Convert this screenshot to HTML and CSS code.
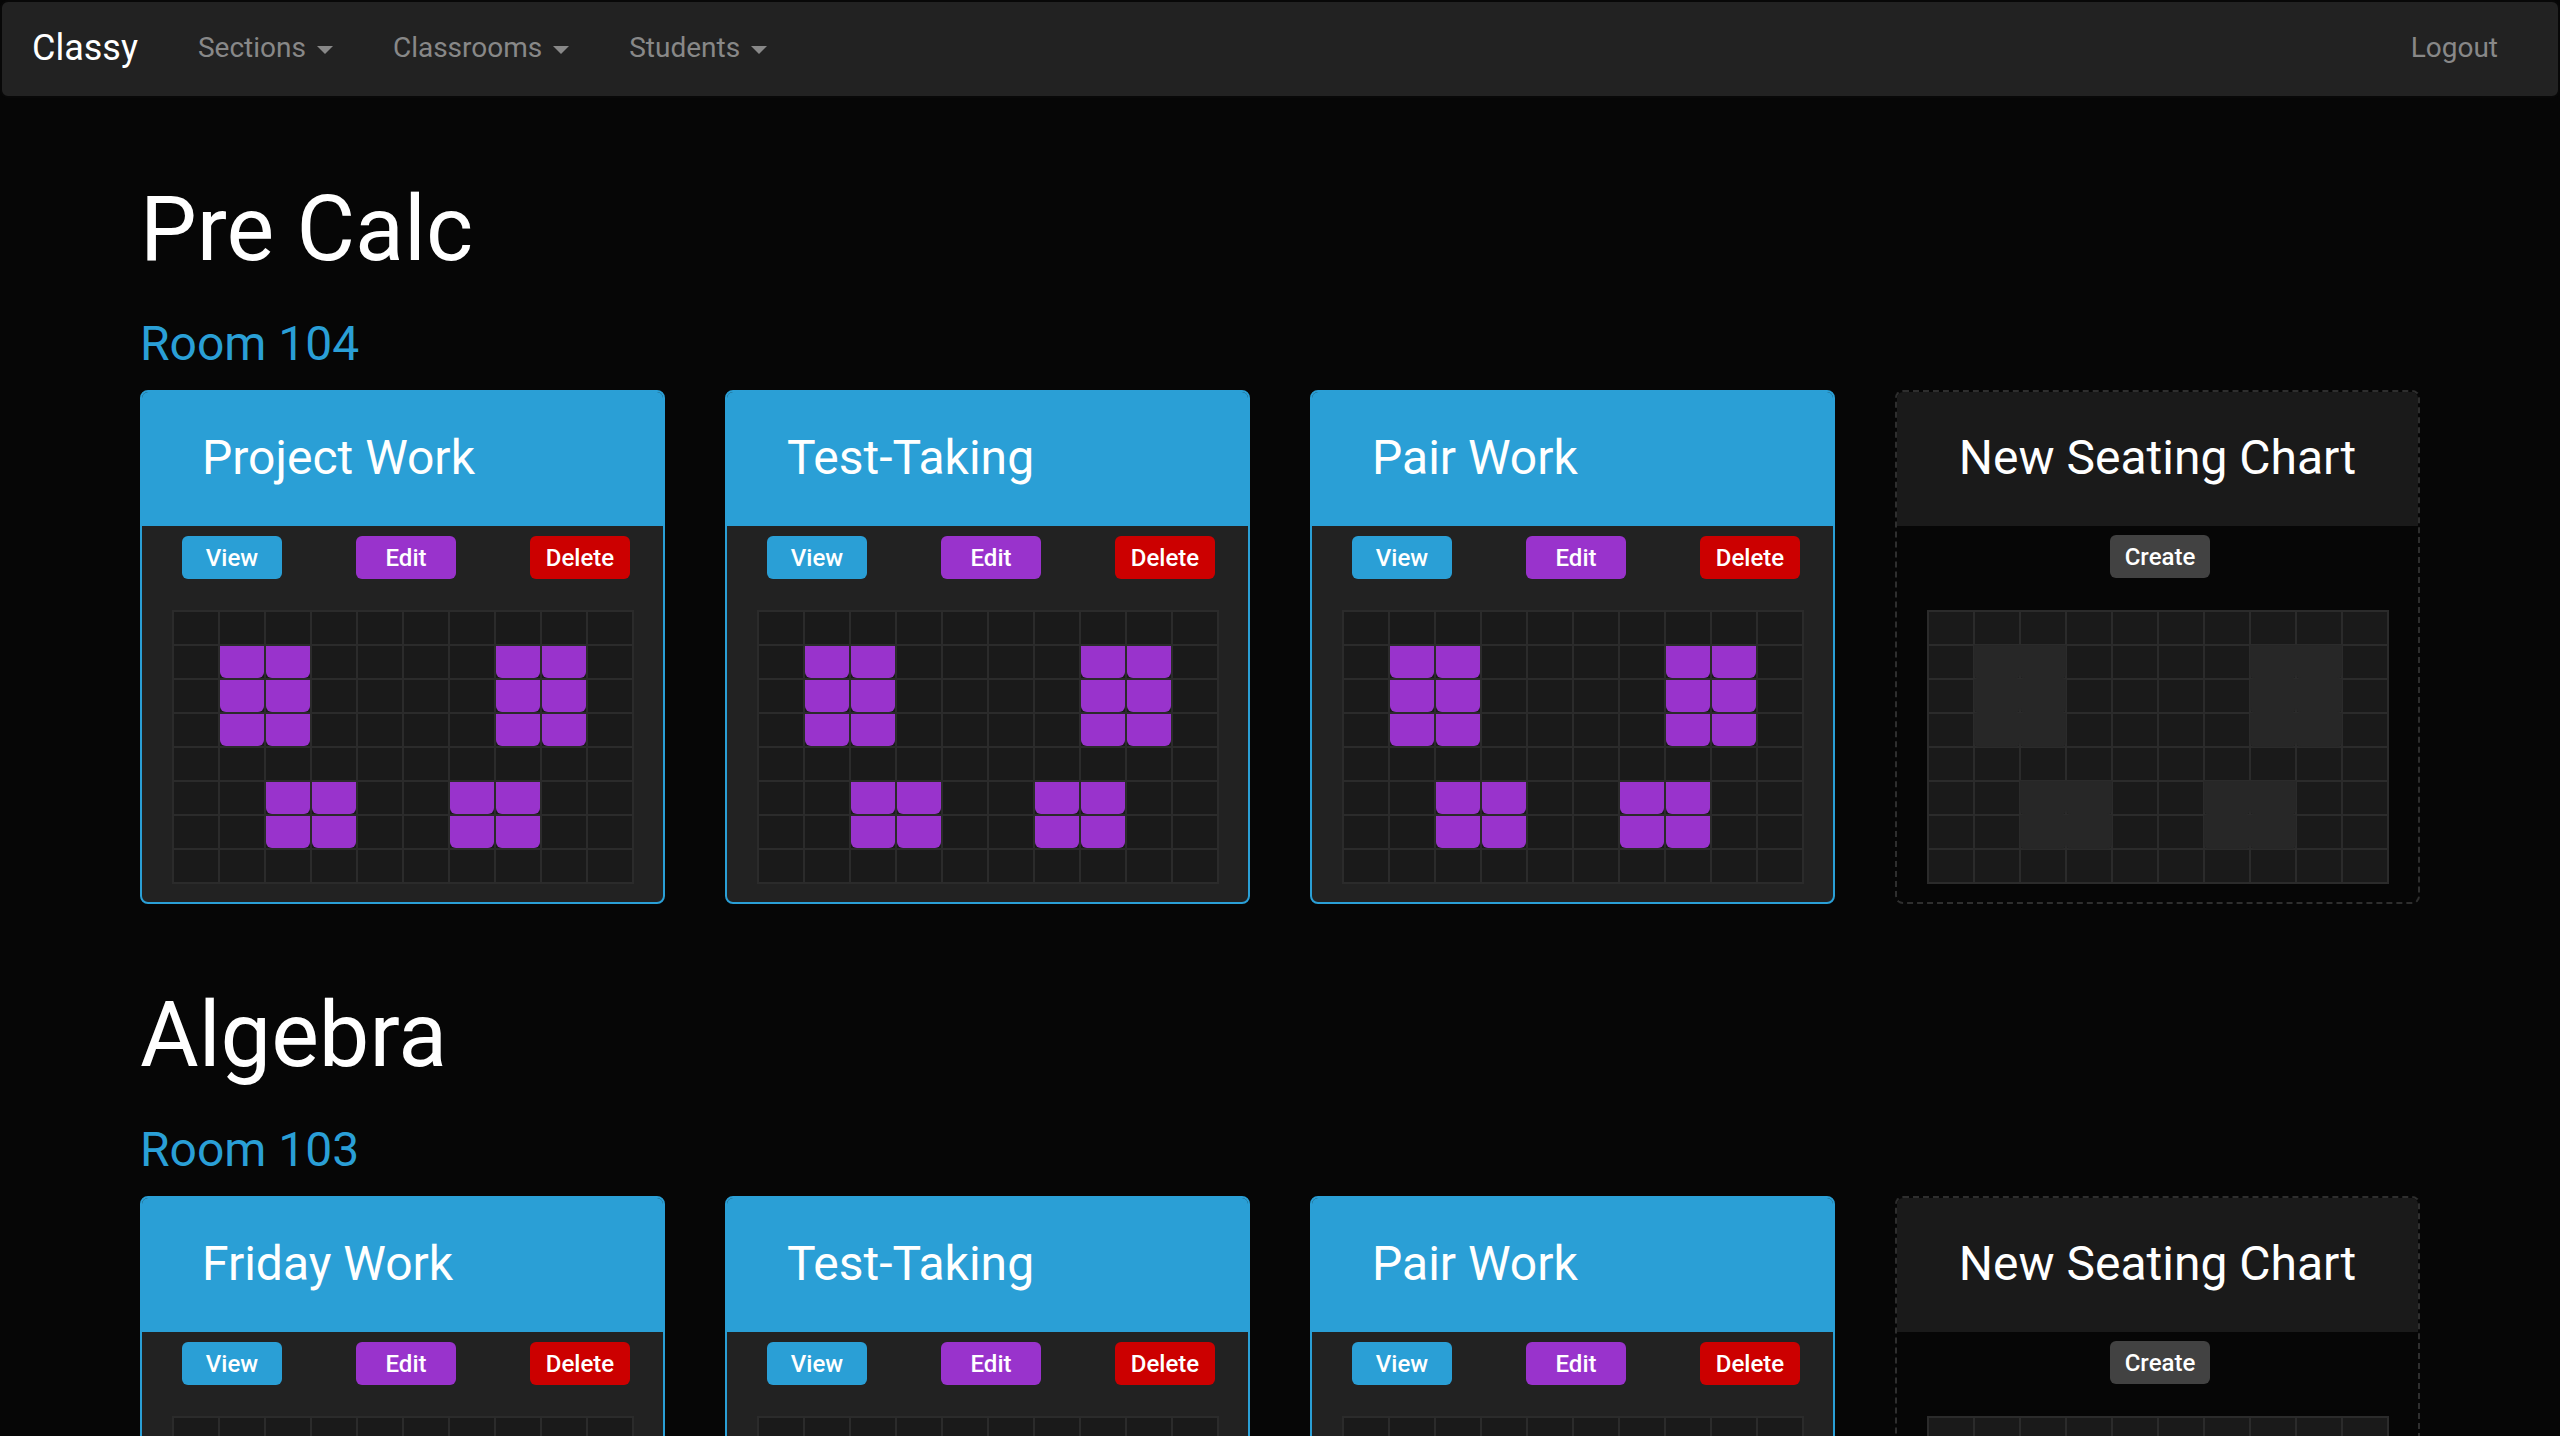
FILE: index.html
```html
<!DOCTYPE html>
<html lang="en">
<head>
<meta charset="utf-8">
<title>Classy</title>
<link rel="stylesheet" href="styles.css">
</head>
<body>
<nav class="navbar">
  <a class="brand" href="#">Classy</a>
  <ul class="nav">
    <li><a href="#">Sections <span class="caret"></span></a></li>
    <li><a href="#">Classrooms <span class="caret"></span></a></li>
    <li><a href="#">Students <span class="caret"></span></a></li>
  </ul>
  <a class="logout" href="#">Logout</a>
</nav>

<main class="container">
  <section class="course">
    <h2 class="course-title">Pre Calc</h2>
    <h4 class="room">Room 104</h4>
    <div class="charts">
      <div class="chart">
        <div class="chart-head"><h3>Project Work</h3></div>
        <div class="chart-body">
          <div class="actions"><a class="btn btn-view" href="#">View</a><a class="btn btn-edit" href="#">Edit</a><a class="btn btn-delete" href="#">Delete</a></div>
          <div class="seatmap">
            <i class="seat r2 c2"></i><i class="seat r2 c3"></i><i class="seat r3 c2"></i><i class="seat r3 c3"></i><i class="seat r4 c2"></i><i class="seat r4 c3"></i>
            <i class="seat r2 c8"></i><i class="seat r2 c9"></i><i class="seat r3 c8"></i><i class="seat r3 c9"></i><i class="seat r4 c8"></i><i class="seat r4 c9"></i>
            <i class="seat r6 c3"></i><i class="seat r6 c4"></i><i class="seat r7 c3"></i><i class="seat r7 c4"></i>
            <i class="seat r6 c7"></i><i class="seat r6 c8"></i><i class="seat r7 c7"></i><i class="seat r7 c8"></i>
          </div>
        </div>
      </div>
      <div class="chart">
        <div class="chart-head"><h3>Test-Taking</h3></div>
        <div class="chart-body">
          <div class="actions"><a class="btn btn-view" href="#">View</a><a class="btn btn-edit" href="#">Edit</a><a class="btn btn-delete" href="#">Delete</a></div>
          <div class="seatmap">
            <i class="seat r2 c2"></i><i class="seat r2 c3"></i><i class="seat r3 c2"></i><i class="seat r3 c3"></i><i class="seat r4 c2"></i><i class="seat r4 c3"></i>
            <i class="seat r2 c8"></i><i class="seat r2 c9"></i><i class="seat r3 c8"></i><i class="seat r3 c9"></i><i class="seat r4 c8"></i><i class="seat r4 c9"></i>
            <i class="seat r6 c3"></i><i class="seat r6 c4"></i><i class="seat r7 c3"></i><i class="seat r7 c4"></i>
            <i class="seat r6 c7"></i><i class="seat r6 c8"></i><i class="seat r7 c7"></i><i class="seat r7 c8"></i>
          </div>
        </div>
      </div>
      <div class="chart">
        <div class="chart-head"><h3>Pair Work</h3></div>
        <div class="chart-body">
          <div class="actions"><a class="btn btn-view" href="#">View</a><a class="btn btn-edit" href="#">Edit</a><a class="btn btn-delete" href="#">Delete</a></div>
          <div class="seatmap">
            <i class="seat r2 c2"></i><i class="seat r2 c3"></i><i class="seat r3 c2"></i><i class="seat r3 c3"></i><i class="seat r4 c2"></i><i class="seat r4 c3"></i>
            <i class="seat r2 c8"></i><i class="seat r2 c9"></i><i class="seat r3 c8"></i><i class="seat r3 c9"></i><i class="seat r4 c8"></i><i class="seat r4 c9"></i>
            <i class="seat r6 c3"></i><i class="seat r6 c4"></i><i class="seat r7 c3"></i><i class="seat r7 c4"></i>
            <i class="seat r6 c7"></i><i class="seat r6 c8"></i><i class="seat r7 c7"></i><i class="seat r7 c8"></i>
          </div>
        </div>
      </div>
      <div class="chart chart-new">
        <div class="chart-head"><h3>New Seating Chart</h3></div>
        <div class="chart-body">
          <div class="actions actions-center"><a class="btn btn-create" href="#">Create</a></div>
          <div class="seatmap">
            <i class="seat r2 c2"></i><i class="seat r2 c3"></i><i class="seat r3 c2"></i><i class="seat r3 c3"></i><i class="seat r4 c2"></i><i class="seat r4 c3"></i>
            <i class="seat r2 c8"></i><i class="seat r2 c9"></i><i class="seat r3 c8"></i><i class="seat r3 c9"></i><i class="seat r4 c8"></i><i class="seat r4 c9"></i>
            <i class="seat r6 c3"></i><i class="seat r6 c4"></i><i class="seat r7 c3"></i><i class="seat r7 c4"></i>
            <i class="seat r6 c7"></i><i class="seat r6 c8"></i><i class="seat r7 c7"></i><i class="seat r7 c8"></i>
          </div>
        </div>
      </div>
    </div>
  </section>

  <section class="course">
    <h2 class="course-title">Algebra</h2>
    <h4 class="room">Room 103</h4>
    <div class="charts">
      <div class="chart">
        <div class="chart-head"><h3>Friday Work</h3></div>
        <div class="chart-body">
          <div class="actions"><a class="btn btn-view" href="#">View</a><a class="btn btn-edit" href="#">Edit</a><a class="btn btn-delete" href="#">Delete</a></div>
          <div class="seatmap">
            <i class="seat r2 c2"></i><i class="seat r2 c3"></i><i class="seat r3 c2"></i><i class="seat r3 c3"></i><i class="seat r4 c2"></i><i class="seat r4 c3"></i>
            <i class="seat r2 c8"></i><i class="seat r2 c9"></i><i class="seat r3 c8"></i><i class="seat r3 c9"></i><i class="seat r4 c8"></i><i class="seat r4 c9"></i>
            <i class="seat r6 c3"></i><i class="seat r6 c4"></i><i class="seat r7 c3"></i><i class="seat r7 c4"></i>
            <i class="seat r6 c7"></i><i class="seat r6 c8"></i><i class="seat r7 c7"></i><i class="seat r7 c8"></i>
          </div>
        </div>
      </div>
      <div class="chart">
        <div class="chart-head"><h3>Test-Taking</h3></div>
        <div class="chart-body">
          <div class="actions"><a class="btn btn-view" href="#">View</a><a class="btn btn-edit" href="#">Edit</a><a class="btn btn-delete" href="#">Delete</a></div>
          <div class="seatmap">
            <i class="seat r2 c2"></i><i class="seat r2 c3"></i><i class="seat r3 c2"></i><i class="seat r3 c3"></i><i class="seat r4 c2"></i><i class="seat r4 c3"></i>
            <i class="seat r2 c8"></i><i class="seat r2 c9"></i><i class="seat r3 c8"></i><i class="seat r3 c9"></i><i class="seat r4 c8"></i><i class="seat r4 c9"></i>
            <i class="seat r6 c3"></i><i class="seat r6 c4"></i><i class="seat r7 c3"></i><i class="seat r7 c4"></i>
            <i class="seat r6 c7"></i><i class="seat r6 c8"></i><i class="seat r7 c7"></i><i class="seat r7 c8"></i>
          </div>
        </div>
      </div>
      <div class="chart">
        <div class="chart-head"><h3>Pair Work</h3></div>
        <div class="chart-body">
          <div class="actions"><a class="btn btn-view" href="#">View</a><a class="btn btn-edit" href="#">Edit</a><a class="btn btn-delete" href="#">Delete</a></div>
          <div class="seatmap">
            <i class="seat r2 c2"></i><i class="seat r2 c3"></i><i class="seat r3 c2"></i><i class="seat r3 c3"></i><i class="seat r4 c2"></i><i class="seat r4 c3"></i>
            <i class="seat r2 c8"></i><i class="seat r2 c9"></i><i class="seat r3 c8"></i><i class="seat r3 c9"></i><i class="seat r4 c8"></i><i class="seat r4 c9"></i>
            <i class="seat r6 c3"></i><i class="seat r6 c4"></i><i class="seat r7 c3"></i><i class="seat r7 c4"></i>
            <i class="seat r6 c7"></i><i class="seat r6 c8"></i><i class="seat r7 c7"></i><i class="seat r7 c8"></i>
          </div>
        </div>
      </div>
      <div class="chart chart-new">
        <div class="chart-head"><h3>New Seating Chart</h3></div>
        <div class="chart-body">
          <div class="actions actions-center"><a class="btn btn-create" href="#">Create</a></div>
          <div class="seatmap">
            <i class="seat r2 c2"></i><i class="seat r2 c3"></i><i class="seat r3 c2"></i><i class="seat r3 c3"></i><i class="seat r4 c2"></i><i class="seat r4 c3"></i>
            <i class="seat r2 c8"></i><i class="seat r2 c9"></i><i class="seat r3 c8"></i><i class="seat r3 c9"></i><i class="seat r4 c8"></i><i class="seat r4 c9"></i>
            <i class="seat r6 c3"></i><i class="seat r6 c4"></i><i class="seat r7 c3"></i><i class="seat r7 c4"></i>
            <i class="seat r6 c7"></i><i class="seat r6 c8"></i><i class="seat r7 c7"></i><i class="seat r7 c8"></i>
          </div>
        </div>
      </div>
    </div>
  </section>
</main>
</body>
</html>
```

FILE: styles.css
```css
* {
  box-sizing: border-box;
}

html,
body {
  margin: 0;
  background: #060606;
}

body {
  font-family: Roboto, "Liberation Sans", Arial, sans-serif;
  color: #fff;
}

a {
  text-decoration: none;
}

/* ---------- navbar ---------- */
.navbar {
  display: flex;
  align-items: center;
  height: 98px;
  padding-bottom: 3px;
  background: #222;
  border: 2px solid #080808;
  border-radius: 8px;
}

.brand {
  padding: 0 30px;
  font-size: 36px;
  color: #fff;
}

.nav {
  display: flex;
  margin: 0;
  padding: 0;
  list-style: none;
}

.nav a,
.logout {
  display: block;
  padding: 0 30px;
  font-size: 28px;
  color: #888;
}

.logout {
  margin-left: auto;
  margin-right: 30px;
}

.caret {
  display: inline-block;
  width: 0;
  height: 0;
  margin-left: 4px;
  vertical-align: middle;
  border-top: 8px solid #888;
  border-left: 8px solid transparent;
  border-right: 8px solid transparent;
}

/* ---------- content ---------- */
.container {
  width: 2340px;
  margin: 0 auto;
  padding: 82px 30px 0;
  display: flex;
  flex-direction: column;
  gap: 82px;
}

.course {
  display: flex;
  flex-direction: column;
}

.course-title {
  margin: 0;
  font-size: 90px;
  line-height: 99px;
  font-weight: 400;
  color: #fff;
}

.room {
  margin: 38px 0 20px;
  font-size: 48px;
  line-height: 53px;
  font-weight: 400;
  color: #2a9fd6;
}

.charts {
  display: grid;
  grid-template-columns: repeat(4, 1fr);
  column-gap: 60px;
}

.chart {
  border: 2px solid #2a9fd6;
  border-radius: 8px;
  background: #222;
  overflow: hidden;
}

.chart-head {
  height: 134px;
  display: flex;
  align-items: center;
  padding: 0 0 4px 60px;
  background: #2a9fd6;
}

.chart-head h3 {
  margin: 0;
  font-size: 48px;
  font-weight: 400;
  color: #fff;
}

.chart-body {
  padding: 10px 0 18px;
}

.actions {
  display: flex;
  justify-content: space-between;
  padding: 0 33px 0 40px;
}

.actions-center {
  justify-content: center;
  padding: 0 0 0 5px;
  margin-top: -1px;
}

.btn {
  display: flex;
  align-items: center;
  justify-content: center;
  width: 100px;
  height: 43px;
  border-radius: 6px;
  font-size: 24px;
  font-weight: 500;
  color: #fff;
}

.btn-view {
  background: #2a9fd6;
}

.btn-edit {
  background: #9933cc;
}

.btn-delete {
  background: #cc0000;
}

.btn-create {
  background: #424242;
}

/* ---------- seat map ---------- */
.seatmap {
  width: 462px;
  height: 274px;
  margin: 31px auto 0;
  padding: 2px;
  display: grid;
  grid-template-columns: repeat(10, 44px);
  grid-template-rows: repeat(8, 32px);
  gap: 2px;
  background-color: #1a1a1a;
  background-image:
    linear-gradient(to right, #2b2b2b 2px, transparent 2px),
    linear-gradient(to bottom, #2b2b2b 2px, transparent 2px);
  background-size: 46px 34px;
}

.actions-center + .seatmap {
  margin-top: 32px;
}

.seat {
  display: block;
  background: #9933cc;
  border-radius: 0 0 6px 6px;
}

.r2 { grid-row: 2; }
.r3 { grid-row: 3; }
.r4 { grid-row: 4; }
.r6 { grid-row: 6; }
.r7 { grid-row: 7; }
.c2 { grid-column: 2; }
.c3 { grid-column: 3; }
.c4 { grid-column: 4; }
.c7 { grid-column: 7; }
.c8 { grid-column: 8; }
.c9 { grid-column: 9; }

/* ---------- new chart placeholder ---------- */
.chart-new {
  border: 2px dashed #2e2e2e;
  background: transparent;
}

.chart-new .chart-head {
  justify-content: center;
  padding-left: 0;
  background: #1a1a1a;
}

.chart-new .seat {
  background: #272727;
  border-radius: 0 0 4px 4px;
  box-shadow: 0 0 0 1px #272727;
}
```
